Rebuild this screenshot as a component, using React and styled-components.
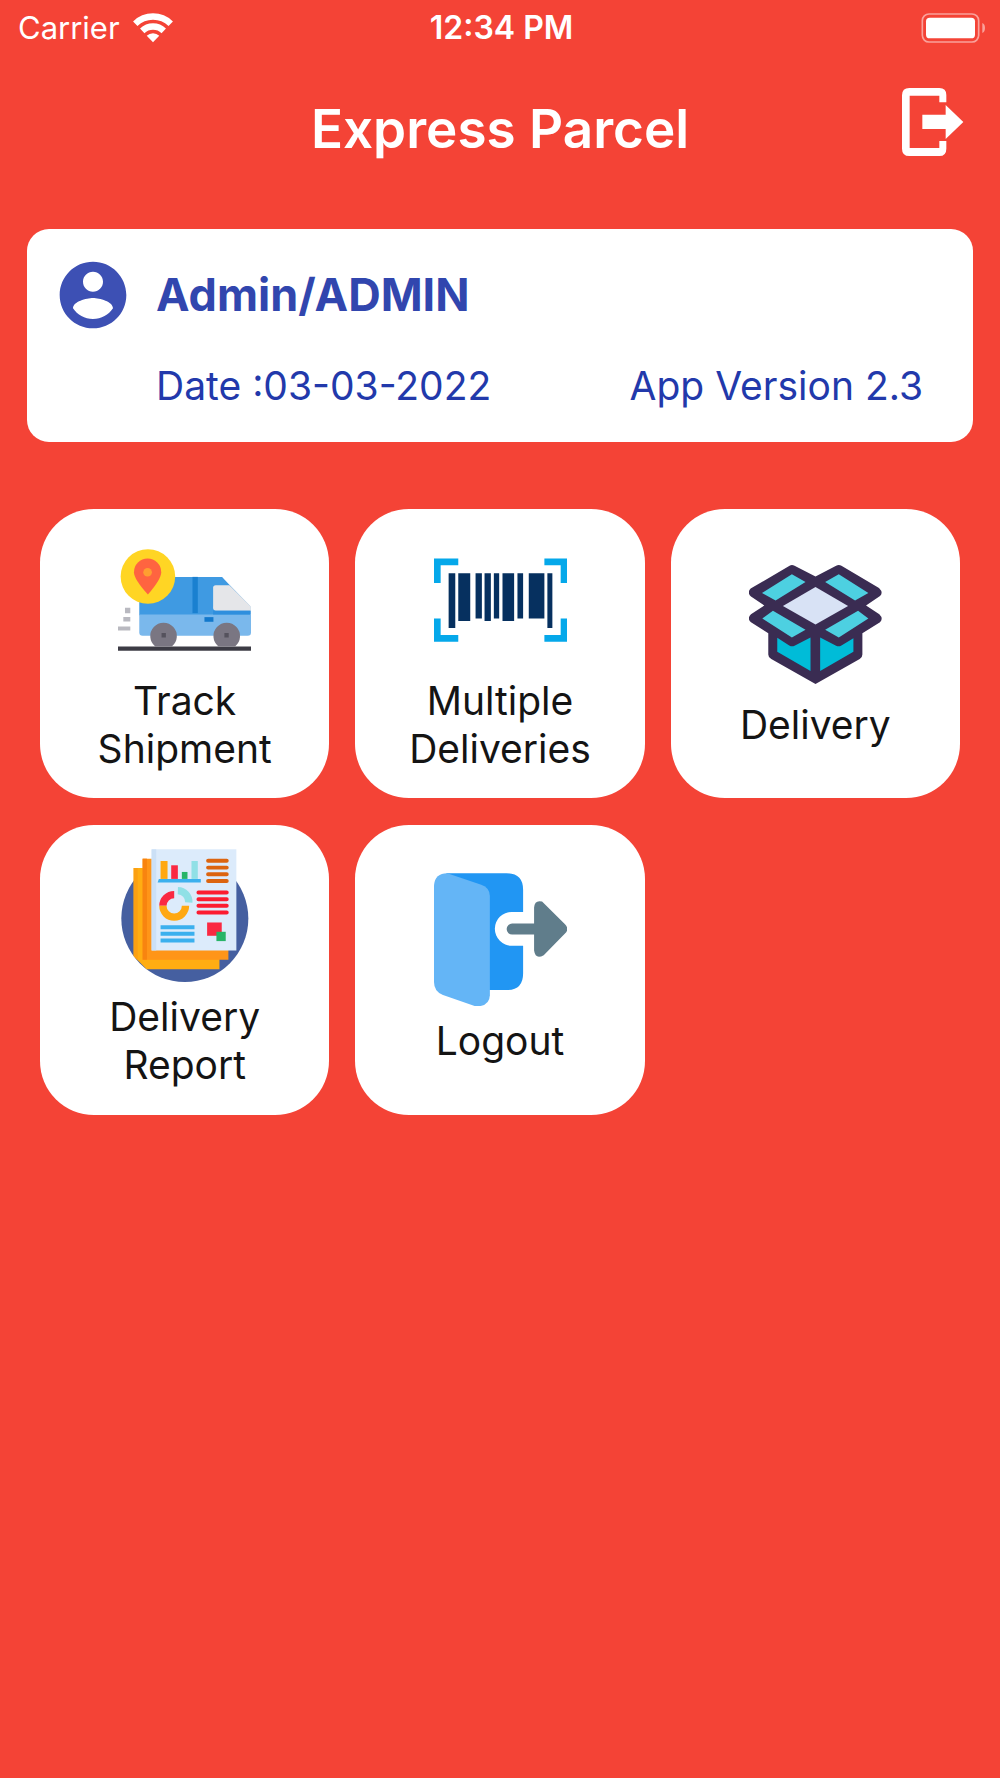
import React from "react";
import styled, { createGlobalStyle } from "styled-components";

const GlobalStyle = createGlobalStyle`
  * {
    box-sizing: border-box;
  }

  body {
    margin: 0;
    background: #f44336;
    font-family: Inter, "Liberation Sans", sans-serif;
  }
`;

const ScreenDiv = styled.div`
  min-height: 100vh;
  background: #f44336;
`;

const StatusBarDiv = styled.div`
  display: grid;
  grid-template-columns: 1fr auto 1fr;
  align-items: center;
  height: 55px;
  padding: 0 15px 0 18px;
  color: #fff;
  font-size: 31px;
  line-height: 38px;
`;

const CarrierDiv = styled.div`
  display: flex;
  align-items: center;
  gap: 13px;
`;

const ClockSpan = styled.span`
  font-size: 32px;
  font-weight: 600;
`;

const BatteryDiv = styled.div`
  display: flex;
  justify-content: flex-end;
`;

const HeaderDiv = styled.header`
  display: grid;
  grid-template-columns: 1fr auto 1fr;
  align-items: center;
  height: 147px;
  padding: 0 36px;
  color: #fff;
`;

const TitleH1 = styled.h1`
  grid-column: 2;
  margin: 0;
  font-size: 53px;
  line-height: 64px;
  font-weight: 600;
`;

const ExitButton = styled.button`
  justify-self: end;
  display: flex;
  margin: 0 0 14px;
  padding: 0;
  border: 0;
  background: none;
  color: inherit;
  cursor: pointer;
`;

const ProfileSection = styled.section`
  display: grid;
  grid-template-columns: 80px 1fr;
  column-gap: 23px;
  row-gap: 27px;
  align-items: center;
  margin: 27px 27px 0;
  padding: 26px 50px 32px 26px;
  border-radius: 22px;
  background: #fff;
  color: #3146ae;
`;

const UserNameH2 = styled.h2`
  margin: 0;
  font-size: 45px;
  line-height: 54px;
  font-weight: 700;
`;

const DetailsDiv = styled.div`
  grid-column: 2;
  display: flex;
  justify-content: space-between;
  color: #2239ab;
  font-size: 39px;
  line-height: 48px;
  font-weight: 400;
`;

const MenuNav = styled.nav`
  display: grid;
  grid-template-columns: repeat(3, 1fr);
  gap: 27px 26px;
  padding: 67px 40px 40px;
`;

const TileButton = styled.button`
  display: flex;
  flex-direction: column;
  align-items: center;
  justify-content: center;
  gap: 11px;
  aspect-ratio: 1;
  padding: 0 40px 2px;
  border: 0;
  border-radius: 54px;
  background: #fff;
  color: #141414;
  font-family: inherit;
  font-size: 39px;
  line-height: 48px;
  font-weight: 400;
  cursor: pointer;
`;

const TileSvg = styled.svg`
  flex: none;
  width: 133px;
  height: 133px;
`;

const WifiIcon = () => (
  <svg width="40" height="30" viewBox="398 36 120 90" fill="none" stroke="#fff">
    <path d="M404.8 68A76.5 76.5 0 0 1 511.2 68" strokeWidth="19" />
    <path d="M425.7 89.6A46.5 46.5 0 0 1 490.3 89.6" strokeWidth="19" />
    <path
      d="M458 124L439.2 104.6A27 27 0 0 1 476.8 104.6Z"
      fill="#fff"
      stroke="none"
    />
  </svg>
);

const BatteryIcon = () => (
  <svg width="64" height="30" viewBox="0 0 192 90" fill="none">
    <rect
      x="4"
      y="3"
      width="169"
      height="84"
      rx="20"
      stroke="#fff"
      strokeOpacity="0.5"
      strokeWidth="5"
    />
    <rect x="15" y="14" width="147" height="62" rx="11" fill="#fff" />
    <path d="M184 30Q192 33 192 45T184 60Z" fill="#fff" fillOpacity="0.5" />
  </svg>
);

const ExitIcon = () => (
  <svg width="62" height="68" viewBox="0 0 186 204" fill="#fff">
    <path d="M22 0H112Q133 0 133 21V43H112V23H23V180H112V159H133V182Q133 204 112 204H22Q0 204 0 182V22Q0 0 22 0Z" />
    <path d="M61 80H131V51L184 102L131 153V123H61Z" />
  </svg>
);

const AccountIcon = () => (
  <svg width="80" height="80" viewBox="0 0 24 24" fill="#3d50b4">
    <path d="M12 2C6.48 2 2 6.48 2 12s4.480 10 10 10 10-4.480 10-10S17.520 2 12 2zm0 3c1.660 0 3 1.340 3 3s-1.340 3-3 3-3-1.340-3-3 1.340-3 3-3zm0 14.200c-2.500 0-4.710-1.280-6-3.220.030-1.990 4-3.080 6-3.080 1.990 0 5.970 1.090 6 3.080-1.290 1.940-3.500 3.220-6 3.220z" />
  </svg>
);

const VanIcon = () => (
  <TileSvg viewBox="52 9 400 400">
    <path
      d="M73 234h16v16h-16zM68 262h21v13h-21zM52 290h37v12h-37z"
      fill="#b9b9c0"
    />
    <path d="M116 141H365L387 165L450 229V256H116Z" fill="#3f9ae2" />
    <path d="M116 254H452V308Q452 318 442 318H126Q116 318 116 308Z" fill="#7ab8ec" />
    <path d="M338 242H451V254H338Z" fill="#2f8fde" />
    <path d="M276 141h16v109h-16z" fill="#1a80d0" />
    <path d="M312 262h27v14h-27z" fill="#1278cc" />
    <path d="M346 166H387L451 229V242H346Q338 242 338 234V174Q338 166 346 166Z" fill="#e5e6e9" />
    <path d="M52 350H452V363H52Z" fill="#3c3b44" />
    <path
      d="M164 350A40 40 0 1 1 214 350ZM354 350A40 40 0 1 1 404 350Z"
      fill="#7a7682"
    />
    <path d="M183 310h13v13h-13zM372 310h13v13h-13z" fill="#55525d" />
    <circle cx="142" cy="140" r="82" fill="#ffd524" />
    <path d="M142 194Q100 148 100 127A41 41 0 0 1 182 127Q182 148 142 194Z" fill="#ff6440" />
    <circle cx="141" cy="127" r="13" fill="#ff9e30" />
  </TileSvg>
);

const BarcodeIcon = () => (
  <TileSvg viewBox="55 -21 400 400">
    <path
      d="M128 66H65V129M387 66H446V129M65 236V296H128M446 236V296H387"
      fill="none"
      stroke="#05a8ea"
      strokeWidth="20"
    />
    <path
      d="M99 100h20v165h-20zM128 100h36v144h-36zM180 100h19v136h-19zM207 100h19v144h-19zM235 100h16v136h-16zM261 100h35v144h-35zM306 100h17v136h-17zM340 100h47v136h-47zM396 100h15v165h-15z"
      fill="#06305f"
    />
  </TileSvg>
);

const BoxIcon = () => (
  <TileSvg viewBox="41 21 400 400">
    <path
      d="M163 47Q170 43 178 47L241 80L303 47Q311 43 319 47L432 114Q446 128 435 138L393 167L433 193Q446 206 435 217L382 250V314Q382 323 374 328L241 403L108 328Q99 323 99 314V250L47 217Q34 206 47 193L87 167L47 140Q34 128 46 116Z"
      fill="#3a2c52"
    />
    <path d="M241 111L339 168L241 224L143 168Z" fill="#d8e2f5" />
    <path
      d="M170 73L211 96L121 152L80 129ZM311 73L270 96L360 152L400 129ZM113 183L81 206L170 263L211 240ZM369 183L400 206L311 263L270 240Z"
      fill="#4dd0e1"
    />
    <path
      d="M126 264L162 287Q170 292 178 288L226 263V364L126 306ZM255 263L303 288Q311 292 319 287L355 265V306L255 364Z"
      fill="#00bcd8"
    />
  </TileSvg>
);

const ReportIcon = () => (
  <TileSvg viewBox="52 42 400 400">
    <circle cx="253" cy="251" r="191" fill="#455fa0" />
    <path d="M99 99H357V404H138L99 364Z" fill="#ffad12" />
    <path d="M99 99H111V377L99 364Z" fill="#fba012" />
    <path d="M126 71H384V375H126Z" fill="#ff9518" />
    <path d="M126 71H139V375H126Z" fill="#f88410" />
    <path d="M153 43H408V347H153Z" fill="#dcebfb" />
    <path d="M153 43H167V347H153Z" fill="#cbe0f6" />
    <path d="M180 78h21v54h-21z" fill="#ffa812" />
    <path d="M212 91h20v41h-20z" fill="#fa2942" />
    <path d="M244 111h17v21h-17z" fill="#27b468" />
    <path d="M273 78h19v54h-19z" fill="#90e0e6" />
    <path d="M175 132H301V143H171Z" fill="#3bb0ee" />
    <path
      d="M323 77H379M323 98H379M323 118H379M323 138H379"
      stroke="#dc640f"
      strokeWidth="12"
      strokeLinecap="round"
    />
    <path
      d="M294 173H379M294 193H379M294 213H379M294 233H379"
      stroke="#fc1c31"
      strokeWidth="12"
      strokeLinecap="round"
    />
    <path
      d="M180 277H282M180 297H282M180 317H282"
      stroke="#3bb0ee"
      strokeWidth="12"
    />
    <g fill="none" strokeWidth="22">
      <path d="M187 213A34 34 0 0 1 221 179" stroke="#fa2942" />
      <path d="M187 213A34 34 0 0 0 255 213" stroke="#ffa812" />
      <path d="M232 167A34 34 0 0 1 265 203" stroke="#90e0e6" />
    </g>
    <path d="M320 263h44v40h-44z" fill="#fa2942" />
    <path d="M348 291h28v28h-28z" fill="#27b468" />
  </TileSvg>
);

const DoorIcon = () => (
  <TileSvg viewBox="55 54 400 400">
    <path
      d="M92 55H273Q323 55 323 105V171H289A51 51 0 0 0 289 273H323V356Q323 406 273 406H200Z"
      fill="#2196f3"
    />
    <path
      d="M55 91Q58 55 95 55L197 89Q223 98 223 123V422Q222 456 180 455L82 421Q55 411 55 382Z"
      fill="#64b5f6"
    />
    <path
      d="M290 206H356V158Q358 134 380 140L449 208Q463 223 449 236L385 301Q360 315 356 287V239H290A16 16 0 0 1 290 206Z"
      fill="#607d8b"
    />
  </TileSvg>
);

const menuItems = [
  { label: "Track Shipment", Icon: VanIcon },
  { label: "Multiple Deliveries", Icon: BarcodeIcon },
  { label: "Delivery", Icon: BoxIcon },
  { label: "Delivery Report", Icon: ReportIcon },
  { label: "Logout", Icon: DoorIcon },
];

const App = () => {
  return (
    <ScreenDiv>
      <GlobalStyle />
      <StatusBarDiv>
        <CarrierDiv>
          <span>Carrier</span>
          <WifiIcon />
        </CarrierDiv>
        <ClockSpan>12:34 PM</ClockSpan>
        <BatteryDiv>
          <BatteryIcon />
        </BatteryDiv>
      </StatusBarDiv>

      <HeaderDiv>
        <TitleH1>Express Parcel</TitleH1>
        <ExitButton type="button" aria-label="Log out">
          <ExitIcon />
        </ExitButton>
      </HeaderDiv>

      <main>
        <ProfileSection>
          <AccountIcon />
          <UserNameH2>Admin/ADMIN</UserNameH2>
          <DetailsDiv>
            <span>Date :03-03-2022</span>
            <span>App Version 2.3</span>
          </DetailsDiv>
        </ProfileSection>

        <MenuNav>
          {menuItems.map(({ label, Icon }) => (
            <TileButton type="button" key={label}>
              <Icon />
              {label}
            </TileButton>
          ))}
        </MenuNav>
      </main>
    </ScreenDiv>
  );
};

export default App;
